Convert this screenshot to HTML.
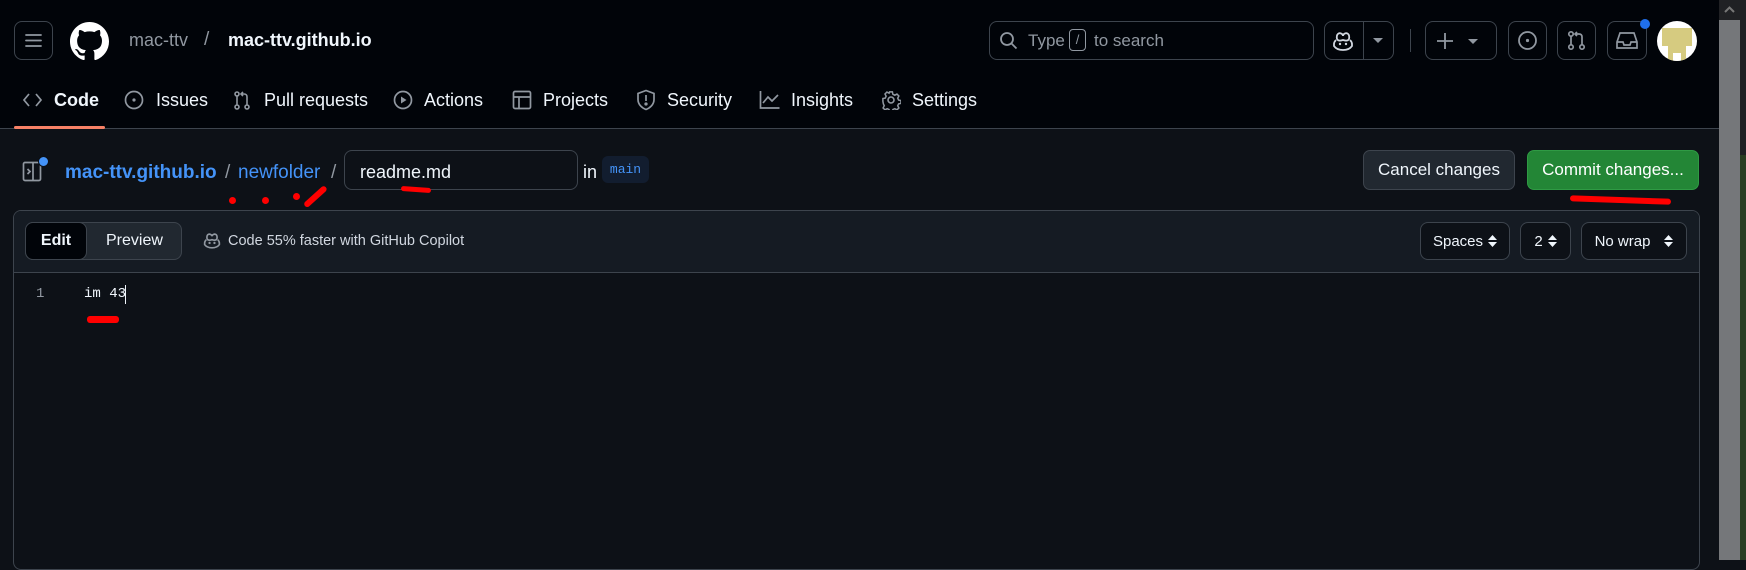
<!DOCTYPE html>
<html><head><meta charset="utf-8"><style>
*{box-sizing:border-box;margin:0;padding:0}
body{width:1746px;height:560px;overflow:hidden;background:#0d1117;font-family:"Liberation Sans",sans-serif;color:#f0f6fc;position:relative}
.a{position:absolute}
.hdr{left:0;top:0;width:1719px;height:129px;background:#010409;border-bottom:1px solid #3d444d}
.btn{position:absolute;border:1px solid #3d444d;border-radius:8px}
.tab{position:absolute;top:90px;font-size:18px;color:#f0f6fc;display:flex;align-items:center}
.sel{position:absolute;top:222px;height:38px;border:1px solid #3d444d;border-radius:8px;background:#0d1117;font-size:15px;display:flex;align-items:center;justify-content:center;gap:5px}
.red{position:absolute;background:#f00;border-radius:3px}
</style></head><body>
<div class="a hdr"></div>
<div class="btn" style="left:14px;top:21px;width:39px;height:39px"></div>
<svg class="a" style="left:24px;top:31px" width="19" height="19"><path d="M2 4h15M2 9.5h15M2 15h15" stroke="#9198a1" stroke-width="1.8" stroke-linecap="round"/></svg>
<svg class="a" style="left:70px;top:22px" width="39" height="39" viewBox="0 0 16 16"><path fill="#fff" d="M8 0C3.58 0 0 3.58 0 8c0 3.540 2.290 6.530 5.470 7.590.4.07.55-.17.55-.38 0-.19-.01-.82-.01-1.49-2.010.37-2.530-.49-2.690-.94-.09-.23-.48-.94-.82-1.130-.28-.15-.68-.52-.01-.53.63-.01 1.080.58 1.230.82.72 1.210 1.870.87 2.330.66.07-.52.28-.87.51-1.070-1.780-.2-3.640-.89-3.640-3.950 0-.87.31-1.590.82-2.150-.08-.2-.36-1.020.08-2.120 0 0 .67-.21 2.200.82.64-.18 1.320-.27 2-.27.68 0 1.360.09 2 .27 1.530-1.040 2.200-.82 2.200-.82.44 1.100.16 1.920.08 2.120.51.56.82 1.270.82 2.150 0 3.070-1.870 3.750-3.650 3.950.29.25.54.73.54 1.480 0 1.070-.01 1.930-.01 2.200 0 .21.15.46.55.38A8.013 8.013 0 0016 8c0-4.420-3.580-8-8-8z"/></svg>
<div class="a" style="left:129px;top:30px;font-size:18px;color:#9198a1">mac-ttv</div>
<div class="a" style="left:204px;top:29px;font-size:19px;color:#9198a1">/</div>
<div class="a" style="left:228px;top:30px;font-size:18px;font-weight:bold">mac-ttv.github.io</div>
<div class="btn" style="left:989px;top:21px;width:325px;height:39px"></div>
<svg class="a" style="left:999px;top:31px" width="20" height="20"><circle cx="8" cy="8" r="6" fill="none" stroke="#9198a1" stroke-width="1.8"/><path d="M12.5 12.5l5 5" stroke="#9198a1" stroke-width="1.8"/></svg>
<div class="a" style="left:1028px;top:31px;font-size:17px;color:#9198a1">Type</div>
<div class="a" style="left:1069px;top:29px;width:17px;height:22px;border:1px solid #9198a1;border-radius:4px;font-size:13px;color:#9198a1;text-align:center;line-height:20px">/</div>
<div class="a" style="left:1094px;top:31px;font-size:17px;color:#9198a1">to search</div>
<div class="btn" style="left:1324px;top:21px;width:70px;height:39px"></div>
<div class="a" style="left:1363px;top:21px;width:1px;height:39px;background:#3d444d"></div>
<svg class="a" style="left:1332px;top:31px" width="22" height="20" viewBox="0 0 22 20"><path d="M4 9c-1 1-2 2-2 4v2c2 3 6 4 9 4s7-1 9-4v-2c0-2-1-3-2-4M5 8C4 3 7 1 10 3c1 1 1 2 1 2s0-1 1-2c3-2 6 0 5 5-1 2-3 2-6 1-3 1-5 1-6-1z" stroke="#d1d7e0" stroke-width="1.8" fill="none"/><circle cx="8" cy="13" r="1.2" fill="#d1d7e0"/><circle cx="14" cy="13" r="1.2" fill="#d1d7e0"/></svg>
<svg class="a" style="left:1373px;top:38px" width="10" height="6"><path d="M0 0h10L5 5z" fill="#9198a1"/></svg>
<div class="a" style="left:1410px;top:29px;width:1px;height:23px;background:#3d444d"></div>
<div class="btn" style="left:1425px;top:21px;width:72px;height:39px"></div>
<svg class="a" style="left:1436px;top:32px" width="18" height="18"><path d="M9 1v16M1 9h16" stroke="#9198a1" stroke-width="1.8"/></svg>
<svg class="a" style="left:1468px;top:39px" width="10" height="6"><path d="M0 0h10L5 5z" fill="#9198a1"/></svg>
<div class="btn" style="left:1508px;top:21px;width:39px;height:39px"></div>
<svg class="a" style="left:1517px;top:30px" width="21" height="21"><circle cx="10.5" cy="10.5" r="8.5" stroke="#9198a1" stroke-width="1.8" fill="none"/><circle cx="10.5" cy="10.5" r="1.6" fill="#9198a1"/></svg>
<div class="btn" style="left:1557px;top:21px;width:39px;height:39px"></div>
<svg class="a" style="left:1566px;top:30px" width="21" height="21" fill="none" stroke="#9198a1" stroke-width="1.7"><circle cx="5" cy="4" r="2.2"/><circle cx="5" cy="17" r="2.2"/><circle cx="16" cy="17" r="2.2"/><path d="M5 6v9M16 15V7c0-2-1-3-3-3H9M11 2L9 4l2 2"/></svg>
<div class="btn" style="left:1607px;top:21px;width:40px;height:39px"></div>
<svg class="a" style="left:1616px;top:31px" width="22" height="20" fill="none" stroke="#9198a1" stroke-width="1.7"><path d="M4 2h14l3 9v6H1v-6zM1 11h6l1 3h6l1-3h6"/></svg>
<div class="a" style="left:1640px;top:19px;width:10px;height:10px;border-radius:50%;background:#1f6feb"></div>
<div class="a" style="left:1657px;top:21px;width:40px;height:40px;border-radius:50%;background:#fff;overflow:hidden"><div class="a" style="left:5px;top:7px;width:30px;height:18px;background:#d6cb80"></div><div class="a" style="left:11px;top:21px;width:18px;height:19px;background:#d6cb80"></div><div class="a" style="left:16px;top:32px;width:8px;height:8px;background:#fff"></div></div>
<!-- scrollbar -->
<div class="a" style="left:1719px;top:0;width:27px;height:560px;background:#202124"></div>
<div class="a" style="left:1719px;top:20px;width:21px;height:540px;background:#75777a"></div>
<div class="a" style="left:1740px;top:155px;width:6px;height:405px;background:#2a3d22"></div>
<svg class="a" style="left:1724px;top:6px" width="11" height="7"><path d="M1 6l4.5-4.5L10 6" stroke="#777" stroke-width="2" fill="none"/></svg>
<!-- tabs -->
<svg class="a" style="left:23px;top:92px" width="19" height="16" fill="none" stroke="#9198a1" stroke-width="1.7"><path d="M6 2L1 8l5 6M13 2l5 6-5 6"/></svg>
<div class="tab" style="left:54px;font-weight:bold">Code</div>
<div class="a" style="left:14px;top:126px;width:91px;height:3px;background:#f78166;border-radius:2px"></div>
<svg class="a" style="left:124px;top:90px" width="20" height="20"><circle cx="10" cy="10" r="8.5" stroke="#9198a1" stroke-width="1.7" fill="none"/><circle cx="10" cy="10" r="1.6" fill="#9198a1"/></svg>
<div class="tab" style="left:156px">Issues</div>
<svg class="a" style="left:232px;top:90px" width="20" height="21" fill="none" stroke="#9198a1" stroke-width="1.6"><circle cx="5" cy="4" r="2"/><circle cx="5" cy="17" r="2"/><circle cx="15" cy="17" r="2"/><path d="M5 6v9M15 15V7c0-2-1-3-3-3H9M11 2L9 4l2 2"/></svg>
<div class="tab" style="left:264px">Pull requests</div>
<svg class="a" style="left:393px;top:90px" width="20" height="20"><circle cx="10" cy="10" r="8.5" stroke="#9198a1" stroke-width="1.7" fill="none"/><path d="M8 6.5v7l5.5-3.5z" fill="#9198a1"/></svg>
<div class="tab" style="left:424px">Actions</div>
<svg class="a" style="left:512px;top:90px" width="20" height="20" fill="none" stroke="#9198a1" stroke-width="1.7"><rect x="1.5" y="1.5" width="17" height="17" rx="1.5"/><path d="M1.5 7h17M7 7v11.5"/></svg>
<div class="tab" style="left:543px">Projects</div>
<svg class="a" style="left:636px;top:89px" width="20" height="22" fill="none" stroke="#9198a1" stroke-width="1.7"><path d="M10 1.5L2 4.5v6c0 5 4 8.5 8 10 4-1.5 8-5 8-10v-6z"/><path d="M10 6v6"/><circle cx="10" cy="15" r=".8" fill="#9198a1"/></svg>
<div class="tab" style="left:667px">Security</div>
<svg class="a" style="left:759px;top:91px" width="21" height="18" fill="none" stroke="#9198a1" stroke-width="1.7"><path d="M1.5 0v17h19M4 12l5-6 4 4 6-6"/></svg>
<div class="tab" style="left:791px">Insights</div>
<svg class="a" style="left:881px;top:90px" width="20" height="20" viewBox="0 0 20 20" fill="none" stroke="#9198a1" stroke-width="1.6"><circle cx="10" cy="10" r="3"/><path d="M8.5 1.5h3l.5 2.5 2 1 2.3-1.2 2 2-1.2 2.3.9 2 2.5.5v3l-2.5.5-.9 2 1.2 2.3-2 2-2.3-1.2-2 .9-.5 2.5h-3l-.5-2.5-2-.9-2.3 1.2-2-2 1.2-2.3-.9-2L1.5 11.5v-3L4 8l.9-2-1.2-2.3 2-2L8 2.9z" transform="scale(.95) translate(.5 .5)"/></svg>
<div class="tab" style="left:912px">Settings</div>
<!-- breadcrumb -->
<svg class="a" style="left:22px;top:160px" width="24" height="24" fill="none" stroke="#9198a1" stroke-width="1.7"><rect x="1.5" y="2.5" width="17" height="18" rx="1.5"/><path d="M11 2.5v18M5.5 9l2.5 2.5-2.5 2.5"/></svg>
<div class="a" style="left:38px;top:156px;width:11px;height:11px;border-radius:50%;background:#4493f8;border:1.5px solid #0d1117"></div>
<div class="a" style="left:65px;top:162px;font-size:19px;color:#4493f8;font-weight:bold">mac-ttv.github.io</div>
<div class="a" style="left:225px;top:162px;font-size:19px;color:#9198a1">/</div>
<div class="a" style="left:238px;top:162px;font-size:19px;color:#4493f8">newfolder</div>
<div class="a" style="left:331px;top:162px;font-size:19px;color:#9198a1">/</div>
<div class="a" style="left:344px;top:150px;width:234px;height:40px;border:1px solid #3d444d;border-radius:8px;background:#0d1117"></div>
<div class="a" style="left:360px;top:162px;font-size:18px">readme.md</div>
<div class="a" style="left:583px;top:162px;font-size:18px">in</div>
<div class="a" style="left:602px;top:156px;width:47px;height:27px;border-radius:6px;background:#121d2f;color:#4493f8;font-family:'Liberation Mono',monospace;font-size:13px;text-align:center;line-height:27px">main</div>
<div class="a" style="left:1363px;top:150px;width:152px;height:40px;border:1px solid #3d444d;border-radius:7px;background:#212830;font-size:17px;text-align:center;line-height:38px">Cancel changes</div>
<div class="a" style="left:1527px;top:150px;width:172px;height:40px;border:1px solid #2f9a44;border-radius:7px;background:#238636;font-size:17px;text-align:center;line-height:38px;color:#fff">Commit changes...</div>
<!-- editor -->
<div class="a" style="left:13px;top:210px;width:1687px;height:360px;border:1px solid #3d444d;border-radius:8px;background:#0d1117;overflow:hidden">
<div class="a" style="left:0;top:0;width:100%;height:62px;background:#151b23;border-bottom:1px solid #3d444d"></div>
</div>
<div class="a" style="left:25px;top:222px;width:157px;height:38px;border:1px solid #3d444d;border-radius:8px;background:#212830"></div>
<div class="a" style="left:25px;top:222px;width:62px;height:38px;border:1px solid #3d444d;border-radius:8px;background:#010409;font-size:16px;font-weight:bold;text-align:center;line-height:36px">Edit</div>
<div class="a" style="left:106px;top:232px;font-size:16px">Preview</div>
<svg class="a" style="left:203px;top:232px" width="18" height="17" viewBox="0 0 22 20"><path d="M4 9c-1 1-2 2-2 4v2c2 3 6 4 9 4s7-1 9-4v-2c0-2-1-3-2-4M5 8C4 3 7 1 10 3c1 1 1 2 1 2s0-1 1-2c3-2 6 0 5 5-1 2-3 2-6 1-3 1-5 1-6-1z" stroke="#9198a1" stroke-width="2" fill="none"/><circle cx="8" cy="13" r="1.4" fill="#9198a1"/><circle cx="14" cy="13" r="1.4" fill="#9198a1"/></svg>
<div class="a" style="left:228px;top:233px;font-size:14.5px;color:#d1d7e0">Code 55% faster with GitHub Copilot</div>
<div class="sel" style="left:1420px;width:90px">Spaces<svg width="9" height="14"><path d="M0 6L4.5 1 9 6zM0 8l4.5 5L9 8z" fill="#f0f6fc"/></svg></div>
<div class="sel" style="left:1520px;width:51px">2<svg width="9" height="14"><path d="M0 6L4.5 1 9 6zM0 8l4.5 5L9 8z" fill="#f0f6fc"/></svg></div>
<div class="sel" style="left:1581px;width:106px;gap:14px">No wrap<svg width="9" height="14"><path d="M0 6L4.5 1 9 6zM0 8l4.5 5L9 8z" fill="#f0f6fc"/></svg></div>
<div class="a" style="left:36px;top:286px;font-family:'Liberation Mono',monospace;font-size:14px;color:#9198a1">1</div>
<div class="a" style="left:84px;top:286px;font-family:'Liberation Mono',monospace;font-size:14px;color:#f0f6fc">im 43</div>
<div class="a" style="left:125px;top:285px;width:1px;height:19px;background:#f0f6fc"></div>
<!-- red marks -->
<div class="red" style="left:229px;top:197px;width:7px;height:7px;border-radius:50%"></div>
<div class="red" style="left:262px;top:197px;width:7px;height:7px;border-radius:50%"></div>
<div class="red" style="left:293px;top:193px;width:7px;height:7px;border-radius:50%"></div>
<div class="red" style="left:305px;top:203px;width:28px;height:6px;transform:rotate(-42deg);transform-origin:left center"></div>
<div class="red" style="left:401px;top:187px;width:30px;height:5px;transform:rotate(4deg)"></div>
<div class="red" style="left:1570px;top:197px;width:101px;height:6px;transform:rotate(2deg)"></div>
<div class="red" style="left:87px;top:316px;width:32px;height:7px"></div>
</body></html>
